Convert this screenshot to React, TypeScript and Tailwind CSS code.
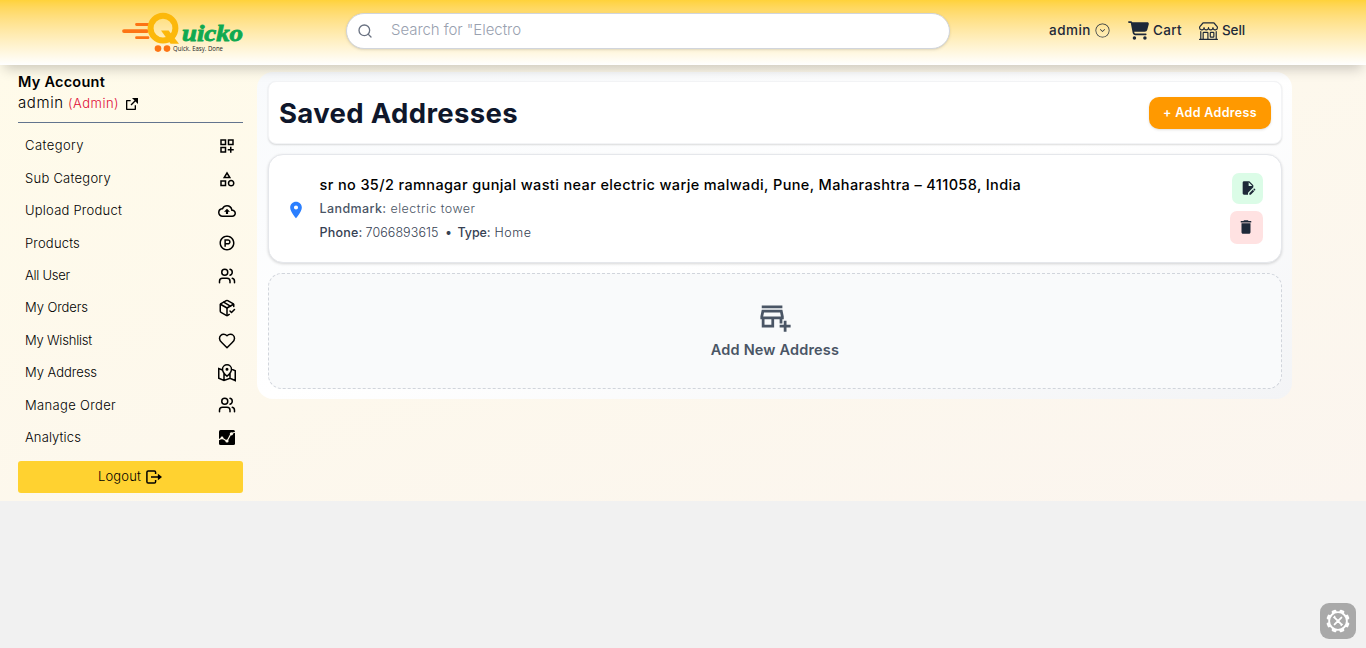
import React from "react";
import {
  MdOutlineDashboardCustomize,
  MdOutlineCategory,
  MdOutlineCloudUpload,
  MdOutlineAddBusiness,
  MdDelete,
  MdLocationOn,
  MdEditDocument,
} from "react-icons/md";
import { RiProductHuntLine, RiExternalLinkFill } from "react-icons/ri";
import { GrMapLocation } from "react-icons/gr";
import { LuPackageCheck, LuUsers, LuHeart } from "react-icons/lu";
import { FiSearch } from "react-icons/fi";
import { CiCircleChevDown } from "react-icons/ci";
import { BsShop } from "react-icons/bs";
import { FaCartShopping } from "react-icons/fa6";

function Logo() {
  return (
    <svg width="124" height="44" viewBox="0 0 124 44" className="block">
      <g stroke="#fd7414" strokeLinecap="round">
        <path d="M15.5 14.5H27M15.5 27.7H27" strokeWidth="2.8" />
        <path d="M3 21.1H26" strokeWidth="3.8" />
      </g>
      <circle cx="42" cy="18.2" r="12.4" fill="none" stroke="#fcb80b" strokeWidth="6" />
      <path d="M40 20.6h7.6l10.4 13.2h-8.4z" fill="#fcb80b" />
      <circle cx="37" cy="38.6" r="3.3" fill="#fd7414" />
      <circle cx="46" cy="38.6" r="3.3" fill="#fd7414" />
      <text x="61" y="31" textLength="61" lengthAdjust="spacingAndGlyphs" fontFamily="'Liberation Serif', serif" fontWeight="700" fontStyle="italic" fontSize="24" fill="#10a950" stroke="#10a950" strokeWidth="0.9">
        uicko
      </text>
      <text x="52" y="41" textLength="50" lengthAdjust="spacingAndGlyphs" fontFamily="'Open Sans', sans-serif" fontSize="6.4" fontWeight="500" fill="#222">
        Quick. Easy. Done
      </text>
    </svg>
  );
}

function ChartIcon() {
  return (
    <svg width="16" height="15" viewBox="0 0 16 15" className="mr-px block">
      <rect width="16" height="15" rx="1.5" fill="#000" />
      <path d="M0 9.8 3 8l5 3.2 4-7.4 4-1.6" fill="none" stroke="#fffaeb" strokeWidth="1.2" />
      <circle cx="3" cy="8" r="1.4" fill="#fffaeb" />
      <circle cx="8" cy="11" r="1.6" fill="#fffaeb" />
      <circle cx="12.4" cy="3.8" r="1.6" fill="#fffaeb" />
    </svg>
  );
}

function LogoutIcon() {
  return (
    <svg width="16" height="14" viewBox="0 0 16 14" className="block">
      <path d="M9.6 4V2.2Q9.6.9 8.3.9H2.2Q.9.9.9 2.2v9.6q0 1.3 1.3 1.3h6.1q1.3 0 1.3-1.3V10" fill="none" stroke="#000" strokeWidth="1.5" />
      <path d="M5 7h7.5" stroke="#000" strokeWidth="1.5" />
      <path d="M11.9 3.8 16 7l-4.1 3.2z" fill="#000" />
    </svg>
  );
}

const teeth = [0, 45, 90, 135, 180, 225, 270, 315];

function GearIcon() {
  return (
    <svg width="24" height="24" viewBox="0 0 24 24">
      <g fill="#fff">
        {teeth.map((a) => (
          <rect key={a} x="9.6" y="0.4" width="4.8" height="5" rx="1" transform={`rotate(${a + 22.5} 12 12)`} />
        ))}
      </g>
      <circle cx="12" cy="12" r="8.9" fill="#a9a9a9" stroke="#fff" strokeWidth="1.9" />
      <path d="m8.6 8.6 6.8 6.8M15.4 8.6l-6.8 6.8" stroke="#fff" strokeWidth="1.9" strokeLinecap="round" />
      <path d="m7.4 8.8 1.8-1.8M14.8 16.8l1.8-1.8" stroke="#fff" strokeWidth="1.2" />
    </svg>
  );
}

const menu = [
  { label: "Category", track: "tracking-[0.43px]", icon: <MdOutlineDashboardCustomize size={18} /> },
  { label: "Sub Category", track: "tracking-[0.257px]", icon: <MdOutlineCategory size={18} /> },
  { label: "Upload Product", track: "tracking-[0.225px]", icon: <MdOutlineCloudUpload size={18} /> },
  { label: "Products", track: "tracking-[0.182px]", icon: <RiProductHuntLine size={18} /> },
  { label: "All User", track: "tracking-[-0.246px]", icon: <LuUsers size={18} /> },
  { label: "My Orders", track: "tracking-[-0.078px]", icon: <LuPackageCheck size={18} /> },
  { label: "My Wishlist", track: "tracking-[-0.206px]", icon: <LuHeart size={18} /> },
  { label: "My Address", track: "tracking-[-0.039px]", icon: <GrMapLocation size={18} /> },
  { label: "Manage Order", track: "tracking-[0.332px]", icon: <LuUsers size={18} /> },
  { label: "Analytics", track: "tracking-[0.12px]", icon: <ChartIcon /> },
];

function Header() {
  return (
    <header className="relative z-10 flex h-[65px] items-start bg-gradient-to-b from-[#ffd23a] to-white pl-[121px] shadow-[0_8px_12px_-4px_rgba(0,0,0,0.2)]">
      <div className="mt-[10px] w-[225px]">
        <Logo />
      </div>
      <div className="mt-[13px] flex h-9 w-[604px] items-center rounded-full border border-gray-300 bg-white pl-[10px] shadow-sm">
        <FiSearch size={16} className="text-gray-500" />
        <span className="ml-[18px] whitespace-nowrap pb-[2px] text-[15px] font-light leading-5 tracking-[-0.056px] text-gray-400">Search for "Electro</span>
      </div>
      <nav className="ml-[99px] mt-[20px] flex h-[21px] items-center whitespace-nowrap text-[13.5px] font-medium text-gray-800">
        <div className="flex w-[79px] items-center">
          <span className="w-[44.5px] tracking-[0.48px]">admin</span>
          <CiCircleChevDown size={17} />
        </div>
        <div className="flex w-[71px] items-center">
          <FaCartShopping size={21} className="mr-[4px]" />
          <span className="tracking-[0.35px]">Cart</span>
        </div>
        <div className="flex items-center">
          <BsShop size={19} className="mr-[4px]" />
          <span className="tracking-[-0.1px]">Sell</span>
        </div>
      </nav>
    </header>
  );
}

function Sidebar() {
  return (
    <aside className="w-[225px] whitespace-nowrap text-black">
      <div className="-mt-px text-[14.5px] font-semibold leading-[21px] tracking-[0.24px]">My Account</div>
      <div className="mt-px flex h-[21px] items-center text-[15px]">
        <span className="w-[50px] font-light tracking-[0.6px]">admin</span>
        <span className="w-[56px] text-[13px] font-light tracking-[0.5px] text-[#e00b37]">(Admin)</span>
        <RiExternalLinkFill size={16} />
      </div>
      <div className="mt-[8px] h-px bg-slate-500" />
      <ul className="mt-[7px]">
        {menu.map((m) => (
          <li key={m.label} className="flex h-[32.4px] items-center justify-between pl-[7px] pr-[7px] text-[13px] font-light">
            <span className={m.track}>{m.label}</span>
            {m.icon}
          </li>
        ))}
      </ul>
      <button className="mt-[7px] flex h-8 w-full items-center justify-center gap-[5px] rounded-[3px] bg-[#ffd230] pr-px text-[13px] font-light">
        <span className="tracking-[0.146px]">Logout</span>
        <LogoutIcon />
      </button>
    </aside>
  );
}

function AddressCard() {
  return (
    <section className="mt-[10px] flex h-[109px] items-center rounded-[15px] border border-gray-200 bg-white pl-[17px] pr-[18px] shadow-[0_1px_3px_rgba(0,0,0,0.16)]">
      <MdLocationOn size={20} className="mt-[3px] shrink-0 text-[#2b7fff]" />
      <div className="ml-[13.5px] flex-1 whitespace-nowrap text-[12.5px] text-gray-600">
        <p className="text-[14.5px] font-medium leading-[25px] tracking-[0.377px] text-black">
          sr no 35/2 ramnagar gunjal wasti near electric warje malwadi, Pune, Maharashtra – 411058, India
        </p>
        <p className="flex leading-6">
          <span className="w-[71px] font-medium tracking-[0.398px]">Landmark:</span>
          <span className="font-light tracking-[0.451px]">electric tower</span>
        </p>
        <p className="flex leading-6 text-gray-700">
          <span className="w-[46px] font-medium tracking-[0.208px]">Phone:</span>
          <span className="w-[79.5px] font-light tracking-[0.084px]">7066893615</span>
          <span className="w-[12.5px]">•</span>
          <span className="w-[37px] font-medium tracking-[-0.087px]">Type:</span>
          <span className="font-light tracking-[0.543px]">Home</span>
        </p>
      </div>
      <div className="flex flex-col items-end gap-[7px] pb-px text-gray-800">
        <button className="flex h-[31px] w-[31px] items-center justify-center rounded-[7px] bg-green-100">
          <MdEditDocument size={16} />
        </button>
        <button className="flex h-[33px] w-[33px] items-center justify-center rounded-[7px] bg-[#ffe2e2] pr-px">
          <MdDelete size={18} />
        </button>
      </div>
    </section>
  );
}

export default function App() {
  return (
    <div className="h-[648px] overflow-hidden bg-[#f1f1f1] font-['Inter',sans-serif]">
      <Header />
      <main className="flex h-[436px] items-start bg-gradient-to-br from-[#fffbea] to-[#fbf5ef] pl-[18px] pt-[7px]">
        <Sidebar />
        <div className="ml-[14px] h-[327px] w-[1035px] rounded-[16px] bg-gradient-to-br from-[#f8fafc] via-white to-[#f3f4f6] pl-[11px] pr-[10px] pt-[9px]">
          <section className="flex h-[63px] items-center justify-between rounded-[8px] border border-gray-100 bg-white px-[10px] shadow-[0_1px_2px_rgba(0,0,0,0.14)]">
            <h1 className="text-[27.5px] font-bold leading-9 tracking-[0.35px] text-[#0f172b]">Saved Addresses</h1>
            <button className="h-8 w-[122px] whitespace-nowrap rounded-[10px] bg-[#ff9900] pt-px text-[12.5px] font-semibold tracking-[0.343px] text-white shadow-sm">
              + Add Address
            </button>
          </section>
          <AddressCard />
          <section className="mt-[10px] flex h-[116px] flex-col items-center rounded-[14px] border border-dashed border-gray-300 bg-[#f9fafb] pt-[26px] text-gray-600">
            <MdOutlineAddBusiness size={33} />
            <span className="mt-[7px] text-[14.5px] font-semibold leading-5 tracking-[0.18px]">Add New Address</span>
          </section>
        </div>
      </main>
      <div className="fixed bottom-[9px] right-[10px] flex h-9 w-9 items-center justify-center rounded-[9px] bg-[#a9a9a9]">
        <GearIcon />
      </div>
    </div>
  );
}
